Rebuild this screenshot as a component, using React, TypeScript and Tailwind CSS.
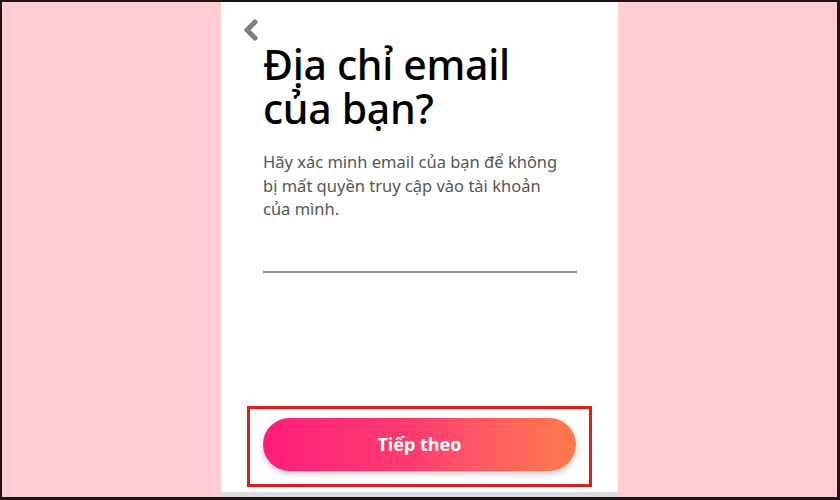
export default function App() {
  return (
    <div className="w-[840px] h-[500px] bg-[#1a1414] pt-[2px] pl-[2px] pr-[3px] pb-[3px]">
      <div className="flex h-full bg-[#ffcdd3]">
        <div className="w-[219px]" />
        <div className="flex w-[397px] flex-col bg-white">
          <div className="relative flex flex-1 flex-col px-[42px]" style={{ fontFamily: '"Noto Sans", sans-serif' }}>
            <svg className="absolute left-[21px] top-[16px]" width="18" height="24" viewBox="0 0 18 24">
              <path d="M13 4 L5 12 L13 20" fill="none" stroke="#7a7f8a" strokeWidth="5" strokeLinecap="round" strokeLinejoin="round" />
            </svg>
            <h1 className="mt-[40px] text-[41px] font-medium leading-[44px] tracking-[-0.3px] text-black">
              Địa chỉ email
              <br />
              của bạn?
            </h1>
            <p className="mt-[20px] max-w-[298px] text-[16.5px] leading-[23.5px] text-[#555]">
              Hãy xác minh email của bạn để không bị mất quyền truy cập vào tài khoản của mình.
            </p>
            <div className="mt-[50px] h-[2px] w-[314px] bg-[#8a8d95]" />
            <div className="flex-1" />
            <div className="-mx-[16px] mb-[5px] border-[3px] border-[#d9201f] px-[13px] pt-[9px] pb-[13px]">
              <button className="h-[53px] w-full rounded-full bg-gradient-to-r from-[#ff1b7b] via-[#ff3d6e] to-[#ff7a4a] text-[18px] font-bold text-white shadow-[0_3px_6px_rgba(0,0,0,0.2)]">
                Tiếp theo
              </button>
            </div>
          </div>
          <div className="h-[5px] bg-[#dcdcdc]" />
        </div>
      </div>
    </div>
  );
}
